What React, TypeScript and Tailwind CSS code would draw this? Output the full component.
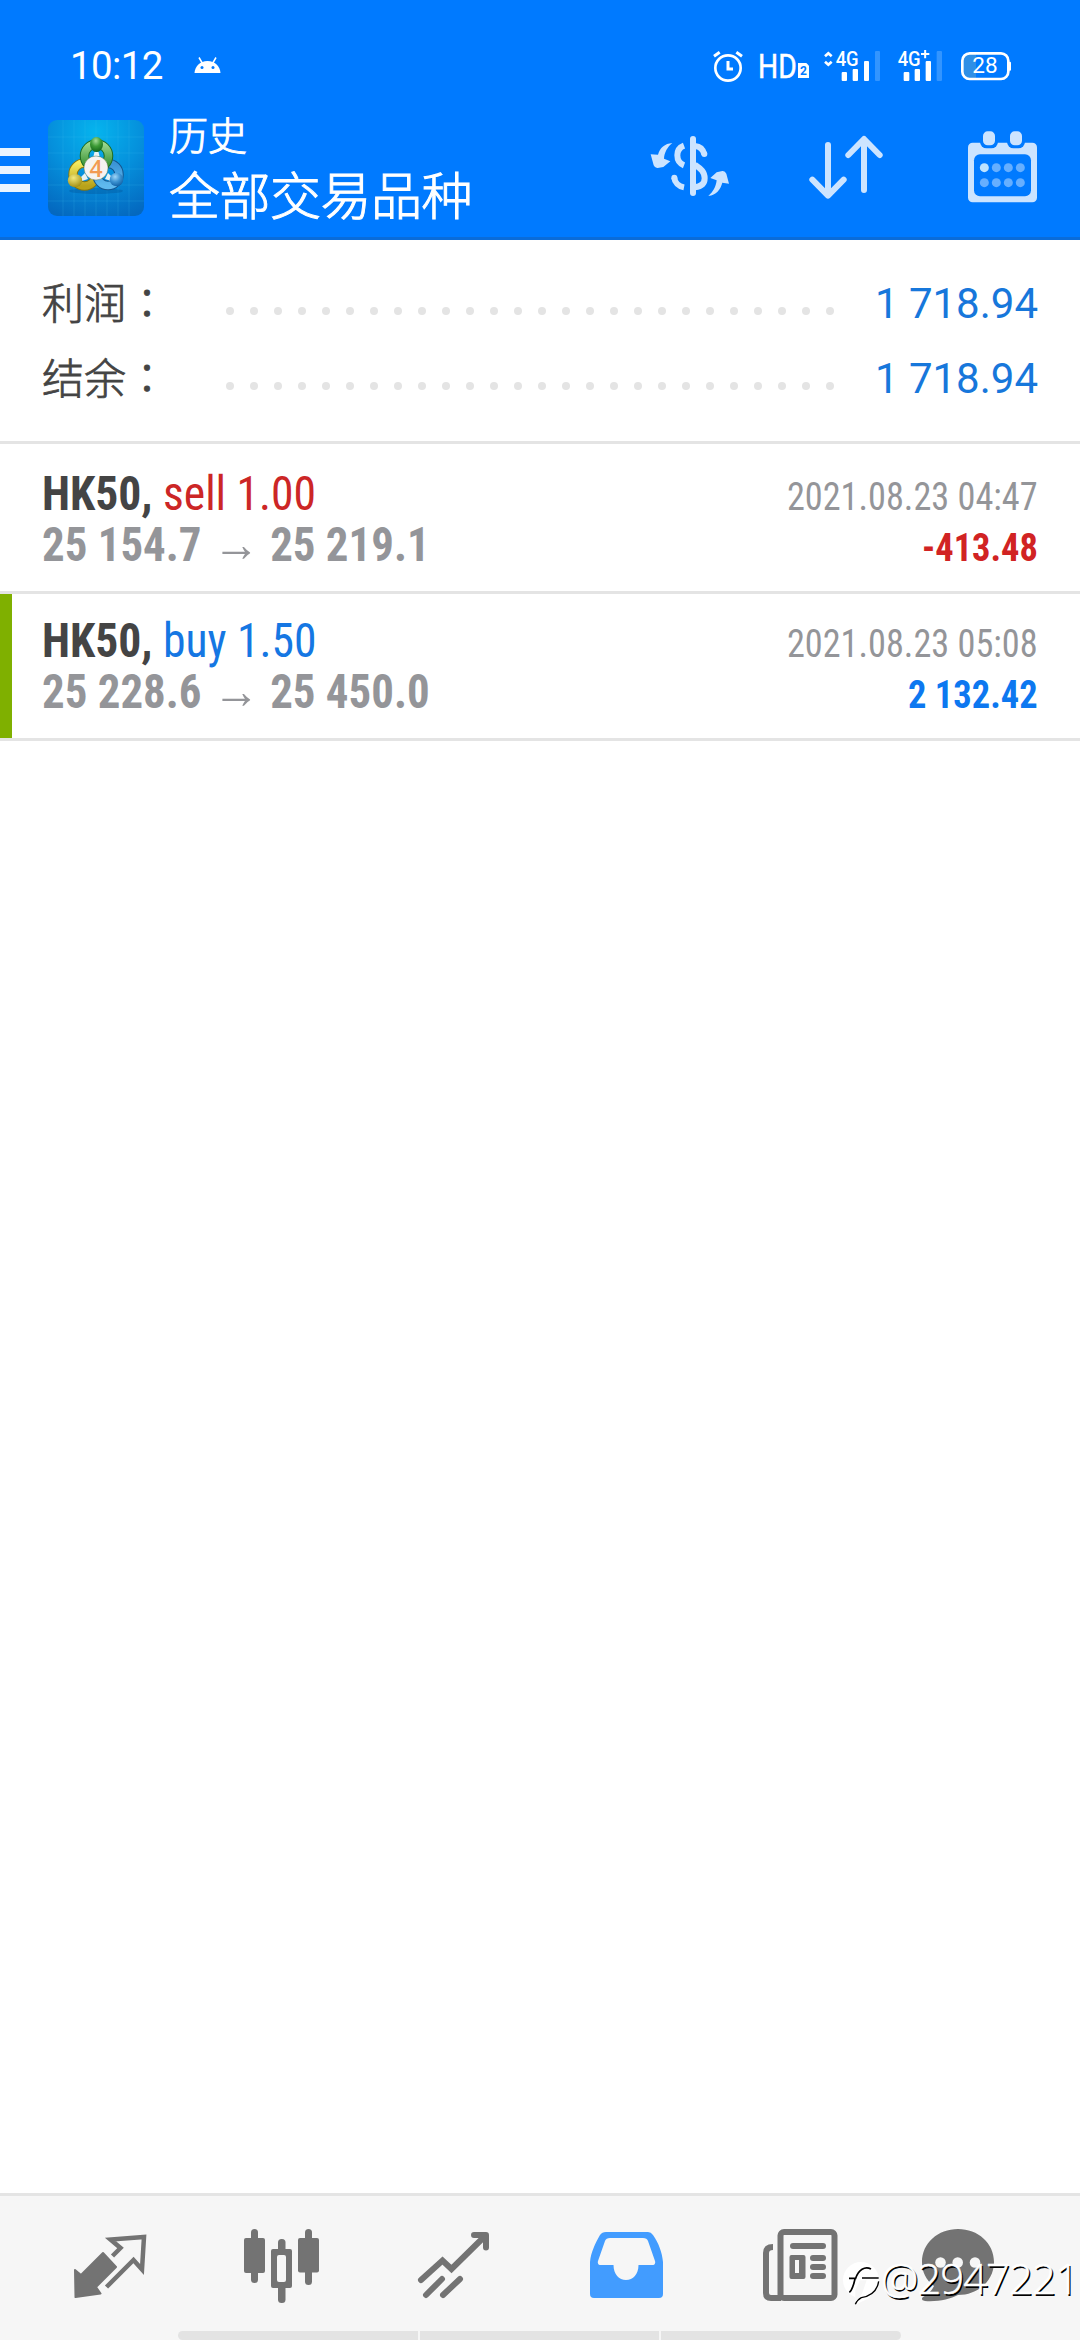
import type { ReactNode } from "react";

type Deal = {
  symbol: string;
  side: "buy" | "sell";
  volume: string;
  open: string;
  close: string;
  time: string;
  profit: string;
  marked?: boolean;
};

const summary = [
  { label: "利润", value: "1 718.94" },
  { label: "结余", value: "1 718.94" },
];

const deals: Deal[] = [
  {
    symbol: "HK50",
    side: "sell",
    volume: "1.00",
    open: "25 154.7",
    close: "25 219.1",
    time: "2021.08.23 04:47",
    profit: "-413.48",
  },
  {
    symbol: "HK50",
    side: "buy",
    volume: "1.50",
    open: "25 228.6",
    close: "25 450.0",
    time: "2021.08.23 05:08",
    profit: "2 132.42",
    marked: true,
  },
];

const DOTS = Array.from({ length: 26 }, (_, i) => i);

function StatusIcons() {
  return (
    <svg className="w-[304px] h-[39px] font-['Roboto']" viewBox="330 51 912 117" fill="#fff">
      {/* Alarm */}
      <g fill="none" stroke="#fff" strokeWidth="8">
        <circle cx="384" cy="114" r="38" />
        <path d="M384 93v24h15M342 79l17-12M426 79l-17-12" strokeWidth="9" />
      </g>
      {/* HD 2 */}
      <text x="474" y="143" fontSize="99" stroke="#fff" strokeWidth="1.500" textLength="116" lengthAdjust="spacingAndGlyphs">HD</text>
      <path d="M594 99h25l8 8v37h-33z" />
      <text x="600" y="136" fontSize="36" fontWeight="700" fill="#007aff">2</text>
      {/* SIM 1 */}
      <path d="M675 79l10-9 10 9M675 95l10 9 10-9" fill="none" stroke="#fff" strokeWidth="8" />
      <text x="707" y="107" fontSize="58" fontWeight="500" textLength="69" lengthAdjust="spacingAndGlyphs">4G</text>
      <rect x="725" y="126" width="16" height="27" rx="3" />
      <rect x="758" y="117" width="16" height="36" rx="3" />
      <rect x="792" y="93" width="15" height="60" rx="3" />
      <rect x="825" y="63" width="15" height="90" rx="3" fill="#3395ff" />
      {/* SIM 2 */}
      <text x="893" y="107" fontSize="58" fontWeight="500" textLength="69" lengthAdjust="spacingAndGlyphs">4G</text>
      <path d="M963 72h25M975.500 60v25" stroke="#fff" strokeWidth="6" />
      <rect x="911" y="126" width="17" height="27" rx="3" />
      <rect x="944" y="117" width="16" height="36" rx="3" />
      <rect x="977" y="93" width="16" height="60" rx="3" />
      <rect x="1010" y="63" width="16" height="90" rx="3" fill="#3395ff" />
      {/* Battery */}
      <path d="M1110 72h18v72h-18q-20 0-20-20v-32q0-20 20-20z" fill="#2f8fe6" />
      <rect x="1087" y="70" width="138" height="77" rx="22" fill="none" stroke="#fff" strokeWidth="8" />
      <rect x="1226" y="95" width="7" height="27" rx="3" />
      <text x="1117" y="130" fontSize="65" textLength="76" lengthAdjust="spacingAndGlyphs">28</text>
    </svg>
  );
}

function AndroidHead() {
  return (
    <svg className="w-[27px] h-[16px]" viewBox="0 0 27 16">
      <path d="M.5 16C1 9 6 4 13.500 4S26 9 26.500 16z" fill="#fff" />
      <path d="M5 .5l3.500 6M22 .5l-3.500 6" stroke="#fff" strokeWidth="1.500" />
      <circle cx="8" cy="10.500" r="1.500" fill="#007aff" />
      <circle cx="19" cy="10.500" r="1.500" fill="#007aff" />
    </svg>
  );
}

function Logo() {
  return (
    <svg className="w-[96px] h-[96px] shrink-0" viewBox="0 0 96 96">
      <defs>
        <radialGradient id="bg" cx=".5" cy=".12" r=".95">
          <stop offset="0" stopColor="#05b4ee" />
          <stop offset=".5" stopColor="#0590dc" />
          <stop offset="1" stopColor="#0468bf" />
        </radialGradient>
        <linearGradient id="green" x1="0" y1="0" x2="0" y2="1">
          <stop offset="0" stopColor="#9bd68c" />
          <stop offset="1" stopColor="#2c8a2b" />
        </linearGradient>
        <linearGradient id="yellow" x1="0" y1="0" x2="0" y2="1">
          <stop offset="0" stopColor="#f6ea5e" />
          <stop offset="1" stopColor="#b8a21a" />
        </linearGradient>
        <linearGradient id="blue" x1="0" y1="0" x2="0" y2="1">
          <stop offset="0" stopColor="#3b94d6" />
          <stop offset="1" stopColor="#5fb9ee" />
        </linearGradient>
        <radialGradient id="greenBall" cx=".45" cy=".25" r=".75">
          <stop offset="0" stopColor="#a5dd98" />
          <stop offset=".5" stopColor="#3d9b36" />
          <stop offset="1" stopColor="#14661a" />
        </radialGradient>
        <radialGradient id="yellowBall" cx=".4" cy=".3" r=".75">
          <stop offset="0" stopColor="#f3ea7e" />
          <stop offset="1" stopColor="#a08c12" />
        </radialGradient>
        <radialGradient id="blueBall" cx=".4" cy=".3" r=".75">
          <stop offset="0" stopColor="#9fd6f8" />
          <stop offset=".5" stopColor="#3c93d2" />
          <stop offset="1" stopColor="#0f5ea3" />
        </radialGradient>
      </defs>
      <rect width="96" height="96" rx="9" fill="url(#bg)" />
      <path
        d="M15 0v96M26 0v96M37 0v96M48 0v96M59 0v96M70 0v96M81 0v96M0 17h96M0 33h96M0 49h96M0 65h96M0 81h96"
        stroke="#4cc4f5"
        strokeOpacity=".22"
        strokeWidth=".8"
      />
      <ellipse cx="48" cy="71" rx="27" ry="3" fill="#034f96" opacity=".35" />
      <g fill="none">
        <circle cx="36.500" cy="54.500" r="11.500" stroke="#857710" strokeWidth="9.500" />
        <circle cx="36.500" cy="54.500" r="11.500" stroke="url(#yellow)" strokeWidth="7.500" />
        <circle cx="60" cy="54.500" r="11" stroke="#14568f" strokeWidth="9.500" />
        <circle cx="60" cy="54.500" r="11" stroke="url(#blue)" strokeWidth="7.500" />
        <circle cx="48.500" cy="36" r="12" stroke="#1c6a20" strokeWidth="9.500" />
        <circle cx="48.500" cy="36" r="12" stroke="url(#green)" strokeWidth="7.500" />
      </g>
      <path d="M46.500 32h4l1 4h-6zM33 57l4-4 3 6-6 2zM64 57l-4-4-3 6 6 2z" fill="#e8f2f4" />
      <ellipse cx="48.500" cy="24.500" rx="6.500" ry="7.500" fill="url(#greenBall)" />
      <ellipse cx="27" cy="60.500" rx="7.200" ry="6.600" fill="url(#yellowBall)" />
      <ellipse cx="68.500" cy="59.500" rx="6.800" ry="6.800" fill="url(#blueBall)" />
      <circle cx="48" cy="48" r="12" fill="#f6f3f1" stroke="#4f6a3a" strokeOpacity=".5" strokeWidth=".8" />
      <text x="41.500" y="56.500" className="font-['Open_Sans'] font-semibold" fontSize="23" fill="#f29a52">
        4
      </text>
    </svg>
  );
}

function CurrencyIcon() {
  return (
    <svg className="w-[100px] h-[90px]" viewBox="0 0 300 270" fill="none" stroke="#cce4ff" strokeWidth="18">
      <path d="M159 57v162" strokeLinecap="round" />
      <path d="M132 77C119 82 112 93 112 106s7 25 20 30" />
      <path d="M103 173c1 14 13 26 29 29" />
      <circle cx="103" cy="173" r="9" fill="#cce4ff" stroke="none" />
      <path d="M165 78c14 1 24 9 28 25" />
      <circle cx="193" cy="102" r="9" fill="#cce4ff" stroke="none" />
      <path d="M165 134c18 12 29 22 29 41s-12 25-29 27" />
      <g fill="#cce4ff" stroke="none">
        <path d="M97 69C74 71 60 83 54 104L32 103l9 33q4 9 12 8l17-3 21-17-19-8c1-19 11-36 25-47z" />
        <path d="M205 228c24-4 36-18 42-40l20 3-8-30q-4-9-12-8l-17 4-19 17 19 7c-2 19-11 35-25 47z" />
      </g>
    </svg>
  );
}

function SortIcon() {
  return (
    <svg className="w-[80px] h-[68px]" viewBox="618 309 240 204" fill="none" stroke="#cce4ff" strokeWidth="18" strokeLinecap="round" strokeLinejoin="round">
      <path d="M684 345v151M637 449l47 48 47-48" />
      <path d="M792 480V328M745 375l47-48 47 48" />
    </svg>
  );
}

function CalendarIcon() {
  return (
    <svg className="w-[69px] h-[72px]" viewBox="1104 302 207 216">
      <rect x="1104" y="337" width="207" height="179" rx="14" fill="#cce4ff" />
      <rect x="1122" y="372" width="171" height="126" rx="18" fill="#007aff" />
      <rect x="1140" y="294" width="54" height="60" rx="20" fill="#007aff" />
      <rect x="1221" y="294" width="54" height="60" rx="20" fill="#007aff" />
      <rect x="1149" y="303" width="36" height="42" rx="14" fill="#cce4ff" />
      <rect x="1230" y="303" width="36" height="42" rx="14" fill="#cce4ff" />
      {[412, 457].map((y) =>
        [1153, 1189, 1225, 1261].map((x) => (
          <circle key={`${x}-${y}`} cx={x} cy={y} r="13.500" fill={x === 1153 && y === 412 ? "#bde3ff" : "#66afff"} />
        ))
      )}
    </svg>
  );
}

function Tab({ x, children }: { x: number; children: ReactNode }) {
  return (
    <button className="h-[144px]">
      <svg className="w-[172px] h-[144px]" viewBox={`${x} 16 172 144`} fill="#737373">
        {children}
      </svg>
    </button>
  );
}

function TabBar() {
  return (
    <nav className="relative h-[147px] border-t-3 border-[#e4e4e4] bg-[#f6f6f6] px-[24px] grid grid-cols-6">
      <Tab x={24}>
        <path d="M75 90l6 5 22-22 13 14-20 20 4.500 6.500L75.500 117z" stroke="#737373" strokeWidth="2" strokeLinejoin="round" />
        <path d="M112.500 76l8-8-10-8.500L144 57l-2 32.500-8.500-9.500-27 27" fill="none" stroke="#737373" strokeWidth="4.500" />
      </Tab>
      <Tab x={196}>
        <rect x="244" y="58" width="21" height="35" rx="2" />
        <rect x="251" y="49" width="7" height="54" rx="3.500" />
        <rect x="298" y="58" width="21" height="34.500" rx="2" />
        <rect x="305" y="49" width="7" height="56" rx="3.500" />
        <rect x="278" y="59" width="7.500" height="64" rx="3.500" />
        <rect x="271" y="69" width="21" height="39" rx="2" />
        <rect x="277" y="75" width="9" height="27" rx="2" fill="#f6f6f6" />
      </Tab>
      <Tab x={368}>
        <g fill="none" stroke="#737373" strokeWidth="6" strokeLinecap="round">
          <path d="M421 100l21.500-19.500 9 8.500L485 56" />
          <path d="M474 55h12v12.500" strokeLinejoin="round" />
          <path d="M426 115l16-16M443 115l17-16" />
        </g>
      </Tab>
      <Tab x={540}>
        <path
          fillRule="evenodd"
          fill="#429cff"
          d="M606 52h42q3 0 5 3c6 9 9 17 10 27v32q0 4-4 4h-65q-4 0-4-4V82c1-10 5-18 10-27q2-3 6-3zM610 58q-4 0-5 3l-7 20q-1 4 3 4h12.500c0 9 5.500 15 12.500 15s12.500-6 12.500-15H652q4 0 3-4l-7-20q-1-3-5-3z"
        />
      </Tab>
      <Tab x={712}>
        <rect x="780.500" y="52" width="54" height="66" rx="3.500" fill="none" stroke="#737373" strokeWidth="6" />
        <path d="M773 67q-7 0-7 6v40q0 5 5 5h10" fill="none" stroke="#737373" strokeWidth="6" />
        <rect x="790" y="63" width="36" height="6" rx="3" />
        <path fillRule="evenodd" d="M791.500 75h12q2 0 2 2v20q0 2-2 2h-12q-2 0-2-2V77q0-2 2-2zM795 80v13h4V80z" />
        <rect x="810" y="75" width="16" height="6" rx="3" />
        <rect x="810" y="84" width="16" height="6" rx="3" />
        <rect x="810" y="93" width="16" height="6" rx="3" />
      </Tab>
      <Tab x={884}>
        <path d="M958 49c20 0 36 14 36 33s-16 33-36 33c-8 4-20 7-33 6q-5-1-2-4c5-2 9-7 11-11-8-6-12-14-12-24 0-19 16-33 36-33z" />
        <circle cx="940.500" cy="82.500" r="5.300" fill="#f6f6f6" />
        <circle cx="957.700" cy="82.500" r="5.300" fill="#f6f6f6" />
        <circle cx="975" cy="82.500" r="5.300" fill="#f6f6f6" />
      </Tab>

      {/* System navigation handle */}
      <div className="absolute bottom-0 left-[178px] w-[723px] h-[9px] flex gap-[2px] rounded-full overflow-hidden">
        <div className="flex-1 bg-[#e3e3e3]" />
        <div className="flex-1 bg-[#e3e3e3]" />
        <div className="flex-1 bg-[#e3e3e3]" />
      </div>

      <UserTag />
    </nav>
  );
}

function UserTag() {
  return (
    <div className="absolute left-[841px] top-[64px] flex">
      <svg className="w-[42px] h-[48px]" viewBox="33 135 126 144">
        <circle cx="93" cy="195" r="54" fill="#fff" />
        <path d="M76 236q46-1 62-25l-20 38-42 20z" fill="#fff" />
        <path d="M57 190h20c8-26 28-38 46-28M96 189h50M58 232c8-6 13-22 17-40" fill="none" stroke="#000" strokeWidth="5" />
        <path d="M146 199c-4 26-22 44-52 49-8 4-14 10-18 20" fill="none" stroke="#000" strokeWidth="4" />
        <path d="M76 226l14-30h20l-14 40-20 26z" fill="#f6f6f6" />
      </svg>
      <span className="-mt-[5px] -ml-[2px] font-['Open_Sans'] font-light text-[42px] leading-[46px] tracking-[-1px] text-white [-webkit-text-stroke:0.5px_white] [text-shadow:1.5px_1.5px_0_#000]">
        @2947221
      </span>
    </div>
  );
}

function DealRow({ deal }: { deal: Deal }) {
  const sell = deal.side === "sell";
  return (
    <div
      className={`border-b-3 border-[#e4e4e4] flex font-['Roboto'] [font-stretch:75%] text-[48px] leading-[51px] ${
        deal.marked ? "h-[147px]" : "h-[150px]"
      }`}
    >
      <div className={`w-[12px] ${deal.marked ? "bg-[#7fb000]" : ""}`} />
      <div className={`flex-1 pl-[30px] pr-[42px] ${deal.marked ? "pt-[21px]" : "pt-[24px]"}`}>
        <div className="h-[51px] flex items-baseline justify-between">
          <p className="whitespace-pre origin-left scale-x-[0.95]">
            <span className="font-bold text-[#444]">{deal.symbol}, </span>
            <span className={sell ? "text-[#cc2626]" : "text-[#1577e3]"}>
              {deal.side} {deal.volume}
            </span>
          </p>
          <span className="text-[39px] text-[#949599] origin-right scale-x-[0.93]">{deal.time}</span>
        </div>
        <div className="h-[51px] flex items-baseline justify-between font-bold">
          <p className="flex items-baseline text-[#949599] origin-left scale-x-[0.935]">
            <span className="w-[183px]">{deal.open}</span>
            <span className="w-[61px] font-['Noto_Sans'] font-semibold leading-[40px] text-[50px]">→</span>
            <span>{deal.close}</span>
          </p>
          <span className={`text-[39px] origin-right scale-x-[0.935] ${sell ? "text-[#d12323]" : "text-[#0d78f0]"}`}>
            {deal.profit}
          </span>
        </div>
      </div>
    </div>
  );
}

export default function App() {
  return (
    <div className="w-[1080px] h-[2340px] bg-white flex flex-col overflow-hidden font-['Roboto','Noto_Sans_CJK_SC',sans-serif]">
      <header className="h-[240px] bg-[#007aff] border-b-3 border-[#0a6cd9] text-white">
        <div className="h-[108px] flex items-start pt-[46px] pl-[70px] pr-[66px]">
          <span className="text-[38.5px] leading-[40px] tracking-[-0.6px] w-[124px]">10:12</span>
          <div className="pt-[11px]">
            <AndroidHead />
          </div>
          <div className="ml-auto pt-[1px]">
            <StatusIcons />
          </div>
        </div>
        <div className="h-[129px] flex">
          <div className="w-[30px] pt-[40px] flex flex-col gap-[10px]">
            <div className="h-[8px] bg-[#e9f4ff]" />
            <div className="h-[8px] bg-[#e9f4ff]" />
            <div className="h-[8px] bg-[#e9f4ff]" />
          </div>
          <div className="pl-[18px] pt-[12px]">
            <Logo />
          </div>
          <div className="pl-[25px] -mt-[1px] font-['Noto_Sans_CJK_SC','Noto_Sans_CJK_TC',sans-serif] font-light [-webkit-text-stroke:1px_white]">
            <p className="text-[39px] leading-[53px]">历史</p>
            <p className="text-[51px] leading-[66px] tracking-[-0.5px]">全部交易品种</p>
          </div>
          <div className="ml-auto flex pr-[43px]">
            <div className="pt-[12px] mr-[66px]">
              <CurrencyIcon />
            </div>
            <div className="pt-[25px] mr-[82px]">
              <SortIcon />
            </div>
            <div className="pt-[23px]">
              <CalendarIcon />
            </div>
          </div>
        </div>
      </header>

      <section className="h-[204px] pt-[22px] border-b-3 border-[#e4e4e4] pl-[42px] pr-[42px]">
        {summary.map((row) => (
          <div key={row.label} className="h-[75px] flex items-start text-[42px] leading-[75px]">
            <span className="w-[184px] mt-[1px] font-['Noto_Sans_CJK_SC',sans-serif] font-light text-[#444] [-webkit-text-stroke:0.8px_#444]">
              {row.label}
              <span className="font-['Noto_Sans_CJK_TC',sans-serif]">：</span>
            </span>
            <div className="w-[608px] mt-[45px] flex justify-between">
              {DOTS.map((d) => (
                <i key={d} className="size-[8px] rounded-full bg-[#e4e4e4]" />
              ))}
            </div>
            <span className="ml-auto mt-[4px] text-[#1777db]">{row.value}</span>
          </div>
        ))}
      </section>

      <main className="flex-1">
        {deals.map((deal) => (
          <DealRow key={deal.time} deal={deal} />
        ))}
      </main>

      <TabBar />
    </div>
  );
}
